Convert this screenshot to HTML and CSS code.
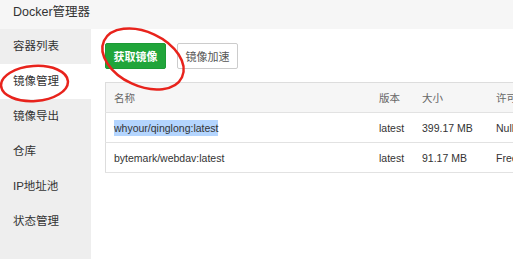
FILE: index.html
```html
<!DOCTYPE html>
<html lang="zh-CN">

<head>
    <meta charset="UTF-8">
    <meta name="viewport" content="width=device-width, initial-scale=1.0">
    <title>Docker管理器</title>
    <link rel="stylesheet" href="styles.css">
</head>

<body>
    <div class="app">
        <div class="top-bar">Docker管理器</div>
        <div class="layout">
            <ul class="side-menu">
                <li>容器列表</li>
                <li class="active">镜像管理</li>
                <li>镜像导出</li>
                <li>仓库</li>
                <li>IP地址池</li>
                <li>状态管理</li>
            </ul>
            <div class="content">
                <div class="toolbar">
                    <button class="btn btn-green">获取镜像</button>
                    <button class="btn btn-plain">镜像加速</button>
                </div>
                <table class="image-table">
                    <thead>
                        <tr>
                            <th class="col-name">名称</th>
                            <th class="col-ver">版本</th>
                            <th class="col-size">大小</th>
                            <th class="col-lic">许可</th>
                        </tr>
                    </thead>
                    <tbody>
                        <tr>
                            <td><span class="selected">whyour/qinglong:latest</span></td>
                            <td>latest</td>
                            <td>399.17 MB</td>
                            <td>Null</td>
                        </tr>
                        <tr>
                            <td>bytemark/webdav:latest</td>
                            <td>latest</td>
                            <td>91.17 MB</td>
                            <td>Free</td>
                        </tr>
                    </tbody>
                </table>
            </div>
        </div>

        <!-- hand drawn marks on the screenshot -->
        <svg class="marks" width="513" height="259" viewBox="0 0 513 259">
            <ellipse cx="143" cy="59" rx="43" ry="27" transform="rotate(25 143 59)" />
            <ellipse cx="34.5" cy="83.5" rx="33.5" ry="17.5" transform="rotate(-4 34.5 83.5)" />
        </svg>
    </div>
</body>

</html>
```

FILE: styles.css
```css
body {
    margin: 0;
    padding: 0;
    font-family: "Liberation Sans", "Noto Sans CJK SC", sans-serif;
    color: #333;
    background: #fff;
}

.app {
    position: relative;
    width: 513px;
    height: 259px;
    overflow: hidden;
}

.top-bar {
    height: 26px;
    padding: 3px 13px 0;
    line-height: 18px;
    font-size: 12.5px;
    background: #f6f6f6;
}

.layout {
    display: flex;
    height: 230px;
}

.side-menu {
    list-style: none;
    margin: 0;
    padding: 0;
    width: 91px;
    flex-shrink: 0;
    background: #eeeeee;
}

.side-menu li {
    height: 35px;
    line-height: 35px;
    padding-left: 13px;
    font-size: 11.5px;
    color: #333;
}

.side-menu li.active {
    background: #fff;
}

.content {
    flex: 1;
    padding: 14px 0 0 14px;
    overflow: hidden;
}

.toolbar {
    display: flex;
    gap: 11px;
}

.btn {
    height: 26px;
    width: 61px;
    padding: 0;
    font-family: inherit;
    font-size: 11px;
    border-radius: 2px;
    cursor: pointer;
}

.btn-green {
    background: #20a53a;
    border: 1px solid #1c9a35;
    color: #fff;
    font-weight: bold;
}

.btn-plain {
    background: #fff;
    border: 1px solid #ccc;
    color: #555;
}

.image-table {
    margin-top: 13px;
    width: 460px;
    border-collapse: collapse;
    table-layout: fixed;
    font-size: 10.5px;
    border-left: 1px solid #ddd;
    border-top: 1px solid #ddd;
}

.image-table th,
.image-table td {
    height: 29px;
    padding: 0 8px;
    text-align: left;
    white-space: nowrap;
    overflow: hidden;
    border-bottom: 1px solid #e2e2e2;
}

.image-table th {
    background: #f6f6f6;
    font-weight: normal;
    color: #666;
}

.image-table td {
    color: #333;
}

.col-name {
    width: 249px;
}

.col-ver {
    width: 27px;
}

.col-size {
    width: 58px;
}

.selected {
    background: #b4d5fe;
    padding: 2px 0;
}

.marks {
    position: absolute;
    left: 0;
    top: 0;
    pointer-events: none;
}

.marks ellipse {
    fill: none;
    stroke: #e8231c;
    stroke-width: 2.5;
}
```
